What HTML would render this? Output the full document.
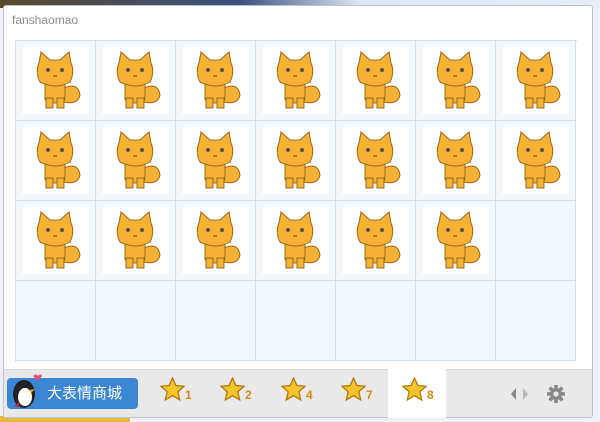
<!DOCTYPE html>
<html><head><meta charset="utf-8"><style>
*{margin:0;padding:0;box-sizing:border-box}
body{width:600px;height:422px;overflow:hidden;background:#eef1f6;font-family:"Liberation Sans","Noto Sans CJK SC",sans-serif;position:relative}
.bgtop{position:absolute;left:0;top:0;width:600px;height:8px;background:linear-gradient(90deg,#5a4a2a 0,#3a5080 40%,#dfe6f2 60%,#e8eef8 100%)}
.bgbot{position:absolute;left:0;top:416px;width:130px;height:6px;background:#e8b840}
.panel{position:absolute;left:3px;top:5px;width:590px;height:413px;background:#fff;border:1px solid #b9c3cf;border-radius:3px}
.title{position:absolute;left:12px;top:13px;font-size:12px;color:#8c8c8c}
.grid{position:absolute;left:15px;top:40px;width:562px;height:322px;border-top:1px solid #d3dfe9;border-left:1px solid #d3dfe9}
.cell{position:absolute;width:80px;height:80px;border-right:1px solid #d3dfe9;border-bottom:1px solid #d3dfe9;background:#f2f7fc}
.cell .in{position:absolute;left:6px;top:6px;width:67px;height:67px;background:#fff}
.cell svg{position:absolute;left:0;top:0}
.bar{position:absolute;left:4px;top:369px;width:588px;height:48px;background:#e9e9e9;border-top:1px solid #dadada}
.sel{position:absolute;left:388px;top:367px;width:58px;height:51px;background:#fff}
.shop{position:absolute;left:7px;top:378px;width:131px;height:31px;background:#3a86d2;border-radius:4px;color:#fff;font-size:15px;line-height:31px;padding-left:40px}
.peng{position:absolute;left:9px;top:372px}
.star{position:absolute;top:377px;font-size:12px;color:#d98a10;font-weight:bold}
.star svg{vertical-align:bottom}
</style></head><body>
<div class="bgtop"></div>
<div class="bgbot"></div>
<div class="panel"></div>
<div class="title">fanshaomao</div>
<svg width="0" height="0" style="position:absolute">
<defs><symbol id="cat" viewBox="0 0 80 80">
<path d="M46 48 q16 -8 18 6 q-2 10 -16 7z" fill="#f7b236" stroke="#9a6a18" stroke-width="1"/>
<rect x="29" y="40" width="20" height="22" rx="5" fill="#f7b236" stroke="#9a6a18" stroke-width="1"/>
<rect x="30" y="57" width="7" height="10" fill="#f7b236" stroke="#9a6a18" stroke-width="1"/>
<rect x="41" y="57" width="7" height="10" fill="#f7b236" stroke="#9a6a18" stroke-width="1"/>
<path d="M23 22 l2 -11 l9 8 l10 0 l9 -8 l2 11 q4 9 -1 19 q-14 8 -30 0 q-5 -10 -1 -19z" fill="#f7b236" stroke="#9a6a18" stroke-width="1"/>
<circle cx="32" cy="29" r="2" fill="#553"/><circle cx="46" cy="29" r="2" fill="#553"/>
<path d="M37 35 h4" stroke="#6a3a10" stroke-width="1"/>
</symbol>
<symbol id="st" viewBox="0 0 24 24"><path d="M12 1 l3.2 7.2 7.8 .8 -5.9 5.2 1.8 7.8 -6.9 -4.1 -6.9 4.1 1.8 -7.8 -5.9 -5.2 7.8 -.8z" fill="#f6c52c" stroke="#b57a0a" stroke-width="1.3"/></symbol></defs></svg>
<div class="grid">
<div class="cell" style="left:0;top:0"><div class="in"></div><svg width="80" height="80"><use href="#cat"/></svg></div>
<div class="cell" style="left:80px;top:0"><div class="in"></div><svg width="80" height="80"><use href="#cat"/></svg></div>
<div class="cell" style="left:160px;top:0"><div class="in"></div><svg width="80" height="80"><use href="#cat"/></svg></div>
<div class="cell" style="left:240px;top:0"><div class="in"></div><svg width="80" height="80"><use href="#cat"/></svg></div>
<div class="cell" style="left:320px;top:0"><div class="in"></div><svg width="80" height="80"><use href="#cat"/></svg></div>
<div class="cell" style="left:400px;top:0"><div class="in"></div><svg width="80" height="80"><use href="#cat"/></svg></div>
<div class="cell" style="left:480px;top:0"><div class="in"></div><svg width="80" height="80"><use href="#cat"/></svg></div>
<div class="cell" style="left:0;top:80px"><div class="in"></div><svg width="80" height="80"><use href="#cat"/></svg></div>
<div class="cell" style="left:80px;top:80px"><div class="in"></div><svg width="80" height="80"><use href="#cat"/></svg></div>
<div class="cell" style="left:160px;top:80px"><div class="in"></div><svg width="80" height="80"><use href="#cat"/></svg></div>
<div class="cell" style="left:240px;top:80px"><div class="in"></div><svg width="80" height="80"><use href="#cat"/></svg></div>
<div class="cell" style="left:320px;top:80px"><div class="in"></div><svg width="80" height="80"><use href="#cat"/></svg></div>
<div class="cell" style="left:400px;top:80px"><div class="in"></div><svg width="80" height="80"><use href="#cat"/></svg></div>
<div class="cell" style="left:480px;top:80px"><div class="in"></div><svg width="80" height="80"><use href="#cat"/></svg></div>
<div class="cell" style="left:0;top:160px"><div class="in"></div><svg width="80" height="80"><use href="#cat"/></svg></div>
<div class="cell" style="left:80px;top:160px"><div class="in"></div><svg width="80" height="80"><use href="#cat"/></svg></div>
<div class="cell" style="left:160px;top:160px"><div class="in"></div><svg width="80" height="80"><use href="#cat"/></svg></div>
<div class="cell" style="left:240px;top:160px"><div class="in"></div><svg width="80" height="80"><use href="#cat"/></svg></div>
<div class="cell" style="left:320px;top:160px"><div class="in"></div><svg width="80" height="80"><use href="#cat"/></svg></div>
<div class="cell" style="left:400px;top:160px"><div class="in"></div><svg width="80" height="80"><use href="#cat"/></svg></div>
<div class="cell" style="left:480px;top:160px"></div>
<div class="cell" style="left:0;top:240px"></div>
<div class="cell" style="left:80px;top:240px"></div>
<div class="cell" style="left:160px;top:240px"></div>
<div class="cell" style="left:240px;top:240px"></div>
<div class="cell" style="left:320px;top:240px"></div>
<div class="cell" style="left:400px;top:240px"></div>
<div class="cell" style="left:480px;top:240px"></div>
</div>
<div class="bar"></div>
<div class="sel"></div>
<div class="shop">大表情商城</div>
<svg class="peng" width="34" height="40" viewBox="0 0 34 40"><ellipse cx="15" cy="22" rx="11" ry="14" fill="#222"/><ellipse cx="16" cy="25" rx="7" ry="9" fill="#fff"/><path d="M20 18 l6 -1 -4 4z" fill="#f6a020"/><path d="M24 4 q3 -3 5 0 q2 -3 4 0 l-4 5z" fill="#e8507a"/><path d="M10 30 l-5 4 5 1z" fill="#d02030"/></svg>
<div class="star" style="left:160px"><svg width="25" height="25"><use href="#st"/></svg>1</div>
<div class="star" style="left:220px"><svg width="25" height="25"><use href="#st"/></svg>2</div>
<div class="star" style="left:281px"><svg width="25" height="25"><use href="#st"/></svg>4</div>
<div class="star" style="left:341px"><svg width="25" height="25"><use href="#st"/></svg>7</div>
<div class="star" style="left:402px"><svg width="25" height="25"><use href="#st"/></svg>8</div>
<svg style="position:absolute;left:508px;top:385px" width="60" height="20"><path d="M8 3 l-5 6 5 6z" fill="#888"/><path d="M15 3 l5 6 -5 6z" fill="#bbb"/><g transform="translate(48,9)" fill="#888"><circle r="6"/><rect x="-1.8" y="-9" width="3.6" height="18"/><rect x="-9" y="-1.8" width="18" height="3.6"/><rect x="-1.8" y="-9" width="3.6" height="18" transform="rotate(45)"/><rect x="-1.8" y="-9" width="3.6" height="18" transform="rotate(-45)"/><circle r="2.6" fill="#e9e9e9"/></g></svg>
</body></html>
